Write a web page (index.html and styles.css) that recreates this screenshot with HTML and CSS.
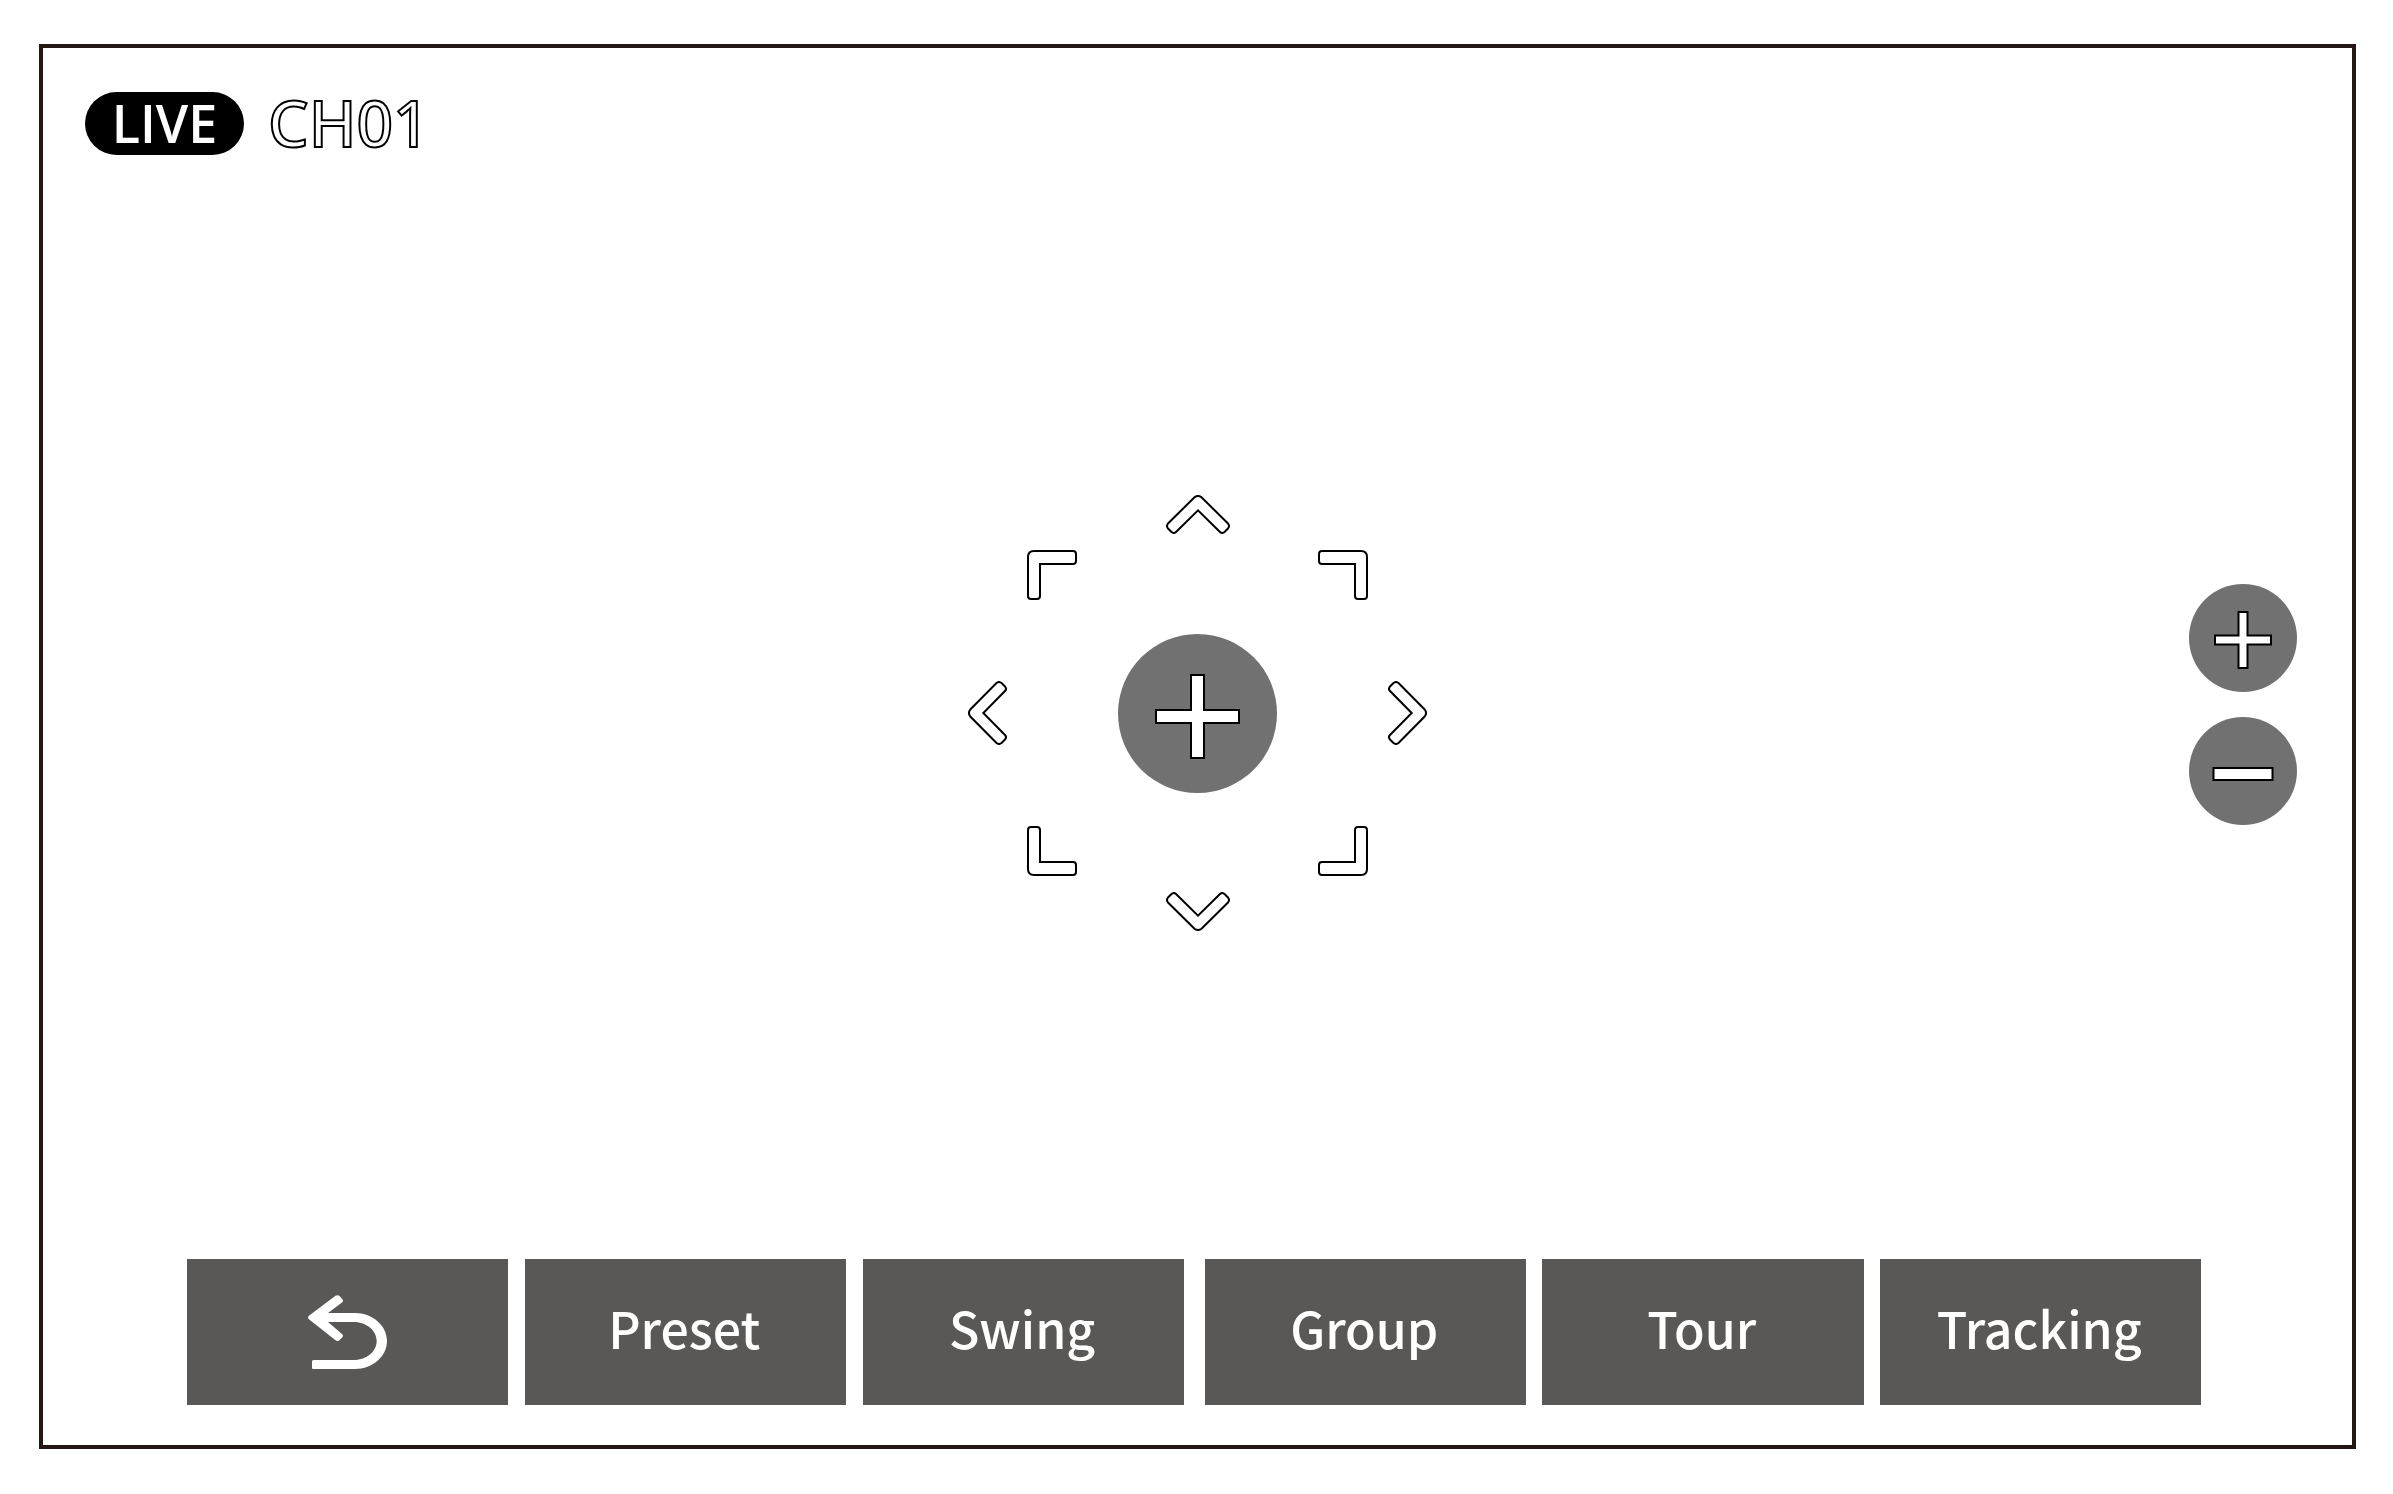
FILE: index.html
```html
<!DOCTYPE html>
<html lang="en">
<head>
<meta charset="utf-8">
<meta name="viewport" content="width=device-width, initial-scale=1">
<title>PTZ live view</title>
<link rel="stylesheet" href="styles.css">
</head>
<body>
<div class="screen">
  <header class="status">
    <span class="live">LIVE</span>
    <h1 class="channel">CH01</h1>
  </header>

  <svg class="defs" width="0" height="0" aria-hidden="true">
    <symbol id="chevron" viewBox="0 0 64 39">
      <path d="M28.5 2.3Q32-.4 35.5 2.3L62 28.5Q64 31 62 33.5L58.5 37Q56 39 54 37L32 15.3L10 37Q8 39 5.500 37L2 33.5Q0 31 2 28.500Z"/>
    </symbol>
    <symbol id="chevron-side" viewBox="0 0 39 64">
      <path d="M2.300 28.500Q-.4 32 2.300 35.500L28.500 62Q31 64 33.500 62L37 58.500Q39 56 37 54L15.300 32L37 10Q39 8 37 5.500L33.500 2Q31 0 28.500 2Z"/>
    </symbol>
    <symbol id="corner" viewBox="0 0 50 50">
      <path d="M7 1H46Q49 1 49 4V11Q49 14 46 14H13V46Q13 49 10 49H4Q1 49 1 46V7Q1 1 7 1Z"/>
    </symbol>
  </svg>

  <main class="stage">
    <div class="pad" role="group" aria-label="Pan and tilt">
      <button class="dir up" aria-label="Up"><svg width="64" height="39"><use href="#chevron"/></svg></button>
      <button class="dir up-left" aria-label="Up left"><svg width="50" height="50"><use href="#corner"/></svg></button>
      <button class="dir up-right" aria-label="Up right"><svg class="flip-x" width="50" height="50"><use href="#corner"/></svg></button>
      <button class="dir left" aria-label="Left"><svg width="39" height="64"><use href="#chevron-side"/></svg></button>
      <button class="round center" aria-label="Center">
        <svg width="159" height="159" viewBox="0 0 159 159"><path d="M73 41H86V76H121V89H86V124H73V89H38V76H73Z"/></svg>
      </button>
      <button class="dir right" aria-label="Right"><svg class="flip-x" width="39" height="64"><use href="#chevron-side"/></svg></button>
      <button class="dir down-left" aria-label="Down left"><svg class="flip-y" width="50" height="50"><use href="#corner"/></svg></button>
      <button class="dir down-right" aria-label="Down right"><svg class="flip-both" width="50" height="50"><use href="#corner"/></svg></button>
      <button class="dir down" aria-label="Down"><svg class="flip-y" width="64" height="39"><use href="#chevron"/></svg></button>
    </div>
    <div class="zoom" role="group" aria-label="Zoom">
      <button class="round" aria-label="Zoom in">
        <svg width="108" height="108" viewBox="0 0 108 108"><path d="M49.500 28H58.500V51.500H82V60.500H58.500V84H49.500V60.500H26V51.500H49.500Z"/></svg>
      </button>
      <button class="round" aria-label="Zoom out">
        <svg width="108" height="108" viewBox="0 0 108 108"><path d="M24.500 51H83.500V63H24.500Z"/></svg>
      </button>
    </div>
  </main>

  <nav class="toolbar" aria-label="PTZ functions">
    <div class="set">
      <button class="tool back" aria-label="Back">
        <svg width="79" height="74" viewBox="0 0 79 74"><path fill="#fff" d="M.6 21L27.500.8Q30-.6 32 1.500L34.600 4.600Q35.600 6 34 7.500L20 18H47C65 18 79 31 79 46S65 74 47 74H5Q4 74 4 73V66.500Q4 65 5.500 65H46C59 65 68.700 56 68.700 46S59 27 46 27H20L34 39Q35.600 40.500 34.600 42L32 44.800Q29.500 47 27.500 45.200L.6 24Q-.4 22.500 .6 21Z"/></svg>
      </button>
      <button class="tool">Preset</button>
      <button class="tool">Swing</button>
    </div>
    <div class="set set-b">
      <button class="tool">Group</button>
      <button class="tool">Tour</button>
      <button class="tool">Tracking</button>
    </div>
  </nav>
</div>
</body>
</html>
```
FILE: styles.css
```css
* {
  box-sizing: border-box;
}

body {
  margin: 0;
  min-height: 100vh;
  padding: 44px 37px 45px 39px;
  display: flex;
  background: #fff;
  font-family: "Noto Sans CJK SC", "Noto Sans", sans-serif;
}

button {
  margin: 0;
  padding: 0;
  border: 0;
  background: none;
  font: inherit;
  cursor: pointer;
}

svg {
  display: block;
}

.defs {
  position: absolute;
}

.screen {
  flex: 1;
  display: flex;
  flex-direction: column;
  border: 4px solid #231815;
}

.status {
  display: flex;
  align-items: center;
  gap: 24px;
  padding: 44px 42px 12px;
}

.live {
  width: 159px;
  height: 63px;
  border-radius: 32px;
  background: #000;
  color: #fff;
  font-family: "Open Sans", "Noto Sans", sans-serif;
  font-size: 52px;
  font-weight: 600;
  line-height: 61px;
  text-align: center;
}

.channel {
  margin: 0;
  color: #fff;
  font-family: "Noto Sans", sans-serif;
  font-size: 64px;
  font-weight: 500;
  line-height: 61px;
  padding-bottom: 2px;
  -webkit-text-stroke: 2px #000;
}

.stage {
  flex: 1;
  display: grid;
  grid-template-columns: 1fr auto 1fr;
  align-items: center;
}

.pad {
  grid-column: 2;
  display: grid;
  grid-template-columns: 39px 50px 201px 50px 39px;
  grid-template-rows: 39px 50px 194px 50px 39px;
  grid-template-areas:
    ". . up . ."
    ". ul . ur ."
    "left . center . right"
    ". dl . dr ."
    ". . down . .";
  gap: 16px 20px;
  place-items: center;
}

.up { grid-area: up; }
.up-left { grid-area: ul; }
.up-right { grid-area: ur; }
.left { grid-area: left; }
.center { grid-area: center; }
.right { grid-area: right; }
.down-left { grid-area: dl; }
.down-right { grid-area: dr; }
.down { grid-area: down; }

.dir svg,
.round svg {
  fill: #fff;
  stroke: #000;
  stroke-width: 2px;
}

.flip-x { transform: scaleX(-1); }
.flip-y { transform: scaleY(-1); }
.flip-both { transform: scale(-1, -1); }

.round {
  border-radius: 50%;
  background: #727171;
}

.zoom {
  justify-self: end;
  display: grid;
  gap: 25px;
  padding: 0 55px 18px 0;
}

.toolbar {
  display: grid;
  grid-template-columns: 1fr 1fr;
  gap: 21px;
  padding: 0 151px 40px 144px;
}

.set {
  display: grid;
  grid-template-columns: repeat(3, 1fr);
  gap: 17px;
}

.set-b {
  gap: 16px;
}

.tool {
  display: flex;
  align-items: center;
  justify-content: center;
  height: 146px;
  padding: 0 2px 10px 0;
  background: #595856;
  color: #fff;
  font-size: 50px;
  font-weight: 500;
}

.back {
  padding: 0;
}
```
